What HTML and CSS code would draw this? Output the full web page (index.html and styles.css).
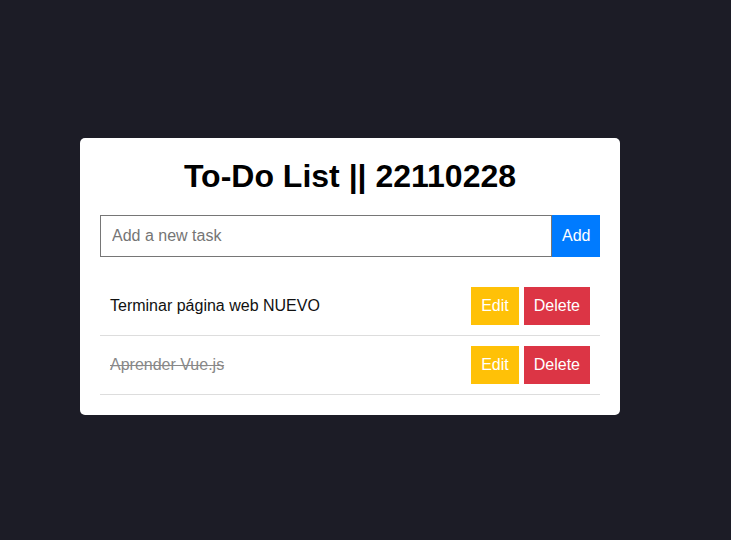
FILE: index.html
```html
<!DOCTYPE html>
<html lang="es">
<head>
<meta charset="utf-8">
<title>To-Do List</title>
<link rel="stylesheet" href="styles.css">
</head>
<body>
<div class="card">
  <h1 class="title">To-Do List || 22110228</h1>
  <div class="add-row">
    <input class="task-input" type="text" placeholder="Add a new task">
    <button class="btn btn-add">Add</button>
  </div>
  <ul class="list">
    <li class="item">
      <span class="item-text">Terminar página web NUEVO</span>
      <div class="actions">
        <button class="btn btn-edit">Edit</button>
        <button class="btn btn-delete">Delete</button>
      </div>
    </li>
    <li class="item">
      <span class="item-text done">Aprender Vue.js</span>
      <div class="actions">
        <button class="btn btn-edit">Edit</button>
        <button class="btn btn-delete">Delete</button>
      </div>
    </li>
  </ul>
</div>
</body>
</html>
```
FILE: styles.css
```css
html, body {
  margin: 0;
  height: 100%;
}
body {
  background: #1c1c26;
  font-family: "Liberation Sans", Arial, sans-serif;
  padding: 138px 0 0 80px;
  box-sizing: border-box;
}
.card {
  width: 540px;
  box-sizing: border-box;
  background: #fff;
  border-radius: 5px;
  padding: 20px;
}
.title {
  margin: 0 0 20px;
  font-size: 32px;
  line-height: 37px;
  text-align: center;
  font-weight: bold;
  color: #000;
}
.add-row {
  display: flex;
  height: 42px;
}
.task-input {
  flex: 1;
  box-sizing: border-box;
  height: 42px;
  border: 1px solid #767676;
  padding: 0 11px;
  font-family: inherit;
  font-size: 16px;
  margin: 0;
  outline: none;
}
.task-input::placeholder {
  color: #757575;
}
.btn {
  border: none;
  font-family: inherit;
  font-size: 16px;
  color: #fff;
  padding: 0 10px;
  margin: 0;
  cursor: pointer;
}
.btn-add {
  width: 48px;
  background: #007bff;
}
.list {
  list-style: none;
  margin: 20px 0 0;
  padding: 0;
}
.item {
  display: flex;
  align-items: center;
  justify-content: space-between;
  padding: 10px;
  border-bottom: 1px solid #ddd;
}
.item-text {
  font-size: 16px;
  color: #111;
}
.item-text.done {
  color: #888;
  text-decoration: line-through;
}
.actions {
  display: flex;
  gap: 5px;
}
.actions .btn {
  height: 38px;
}
.btn-edit {
  background: #ffc107;
}
.btn-delete {
  background: #dc3545;
}
```
